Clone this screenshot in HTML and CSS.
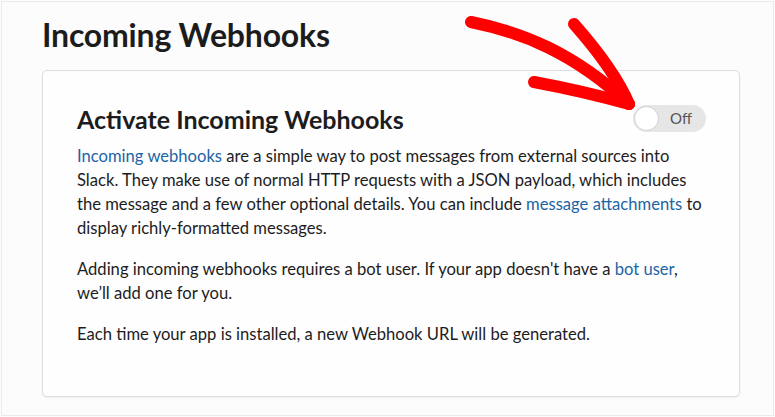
FILE: index.html
```html
<!DOCTYPE html>
<html lang="en">
<head>
<meta charset="utf-8">
<title>Incoming Webhooks</title>
<link rel="stylesheet" href="styles.css">
</head>
<body>
<div class="page">
  <h1 class="title">Incoming Webhooks</h1>
  <section class="card">
    <div class="card-head">
      <h2 class="card-title">Activate Incoming Webhooks</h2>
      <div class="toggle"><span class="knob"></span><span class="toggle-label">Off</span></div>
    </div>
    <p class="text"><a href="#">Incoming webhooks</a> are a simple way to post messages from external sources into Slack. They make use of normal HTTP requests with a JSON payload, which includes the message and a few other optional details. You can include <a href="#">message attachments</a> to display richly-formatted messages.</p>
    <p class="text">Adding incoming webhooks requires a bot user. If your app doesn't have a <a href="#">bot user</a>, we’ll add one for you.</p>
    <p class="text">Each time your app is installed, a new Webhook URL will be generated.</p>
  </section>
  <svg class="arrow" width="200" height="110" viewBox="0 0 200 110" aria-hidden="true">
    <path d="M10 18 C 60 28, 112 48, 168 100" fill="none" stroke="#ff0000" stroke-width="12" stroke-linecap="round"/>
    <path d="M113 20 C 136 46, 156 72, 168 100" fill="none" stroke="#ff0000" stroke-width="12" stroke-linecap="round"/>
    <path d="M73 78 C 105 84, 140 92, 168 100" fill="none" stroke="#ff0000" stroke-width="12" stroke-linecap="round"/>
  </svg>
</div>
</body>
</html>
```
FILE: styles.css
```css
html, body {
  margin: 0;
  padding: 0;
  background: #fcfcfc;
}
body {
  font-family: Lato, "Open Sans", sans-serif;
  color: #1d1c1d;
}
.page {
  position: relative;
  box-sizing: border-box;
  margin: 1px 1px 0 1px;
  height: 415px;
  border: 1px solid #ebebeb;
  padding: 0 33px 0 40px;
  overflow: hidden;
}
.title {
  margin: 13px 0 0 0;
  font-size: 32px;
  font-weight: 700;
  line-height: 40px;
  letter-spacing: -0.2px;
}
.card {
  margin-top: 15px;
  box-sizing: border-box;
  height: 327px;
  background: #fefefe;
  border: 1px solid #dedede;
  border-radius: 5px;
  box-shadow: 0 1px 2px rgba(0,0,0,0.06);
  padding: 31px 33px 0 34px;
}
.card-head {
  display: flex;
  align-items: center;
  justify-content: space-between;
}
.card-title {
  margin: 0;
  font-size: 25px;
  font-weight: 700;
  line-height: 34px;
}
.toggle {
  display: flex;
  align-items: center;
  box-sizing: border-box;
  width: 73px;
  height: 27px;
  border-radius: 14px;
  background: #e6e6e6;
  margin-top: -2px;
}
.knob {
  width: 25px;
  height: 25px;
  border-radius: 50%;
  background: #ffffff;
  border: 1px solid #d0d0d0;
  box-sizing: border-box;
  margin-left: 1px;
}
.toggle-label {
  margin-left: 11px;
  font-size: 15px;
  color: #555;
}
.text {
  margin: 0 0 17px 0;
  font-size: 16.6px;
  line-height: 24px;
  color: #1d1c1d;
}
.card-head + .text {
  margin-top: 8px;
}
.text a {
  color: #1d64a3;
  text-decoration: none;
}
.arrow {
  position: absolute;
  left: 459px;
  top: 2px;
}
```
